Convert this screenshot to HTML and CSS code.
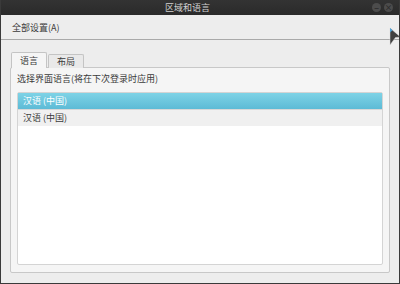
FILE: index.html
```html
<!DOCTYPE html>
<html lang="zh-CN">
<head>
    <meta charset="UTF-8">
    <title>区域和语言</title>
    <link rel="stylesheet" href="styles.css">
</head>
<body>
    <div class="window">
        <div class="titlebar">
            <span class="title">区域和语言</span>
            <div class="wm-buttons">
                <span class="wm-btn">&minus;</span>
                <span class="wm-btn">&times;</span>
            </div>
        </div>
        <div class="menubar">
            <span class="menu-item">全部设置(A)</span>
        </div>
        <div class="content">
            <div class="tabs">
                <div class="tab active">语言</div>
                <div class="tab">布局</div>
            </div>
            <div class="panel">
                <p class="label">选择界面语言(将在下次登录时应用)</p>
                <div class="list">
                    <div class="row selected">汉语 (中国)</div>
                    <div class="row">汉语 (中国)</div>
                </div>
            </div>
        </div>
        <svg class="pointer" width="12" height="19" viewBox="0 0 12 19">
            <polygon points="1,1 11.5,10 6.5,10.5 1,18" fill="#404040" stroke="#dcdcdc" stroke-width="0.5"/>
            <polygon points="1,1 3.5,3.2 1,5.5" fill="#4fa3d8"/>
        </svg>
    </div>
</body>
</html>
```

FILE: styles.css
```css
html, body {
    margin: 0;
    padding: 0;
}
body {
    font-family: "Noto Sans CJK SC", "Noto Sans", sans-serif;
    font-size: 9px;
    color: #3c3c3c;
    background: #2b2b2b;
}
.window {
    position: relative;
    width: 400px;
    height: 284px;
    box-sizing: border-box;
    background: #ededed;
    border: 1px solid #3a3a3a;
    border-top: none;
    display: flex;
    flex-direction: column;
    overflow: hidden;
}
.titlebar {
    height: 15px;
    margin: 0 -1px;
    padding-right: 25px;
    background: linear-gradient(#333333, #2a2a2a);
    display: flex;
    align-items: center;
    justify-content: center;
    position: relative;
}
.title {
    color: #d2d2d2;
    font-size: 9px;
    line-height: 15px;
}
.wm-buttons {
    position: absolute;
    right: 7px;
    top: 3px;
    display: flex;
    gap: 3px;
}
.wm-btn {
    width: 9px;
    height: 9px;
    border-radius: 50%;
    background: #4c4c4c;
    color: #2e2e2e;
    font-size: 8px;
    line-height: 9px;
    text-align: center;
    font-weight: bold;
}
.menubar {
    height: 24px;
    border-bottom: 1px solid #a9a9a9;
    display: flex;
    align-items: center;
    padding-left: 11px;
}
.menu-item {
    color: #3a3a3a;
}
.content {
    flex: 1;
    display: flex;
    flex-direction: column;
    padding: 12px 9px 10px 9px;
}
.tabs {
    display: flex;
    align-items: flex-end;
    gap: 1px;
    padding-left: 1px;
    position: relative;
    z-index: 1;
    margin-bottom: -1px;
}
.tab {
    width: 34px;
    height: 13px;
    line-height: 13px;
    text-align: center;
    border: 1px solid #c4c4c4;
    border-bottom: none;
    border-radius: 2px 2px 0 0;
    background: #e9e9e9;
    color: #3a3a3a;
}
.tab.active {
    height: 15px;
    line-height: 15px;
    background: #f5f5f5;
}
.panel {
    flex: 1;
    display: flex;
    flex-direction: column;
    background: #f5f5f5;
    border: 1px solid #c8c8c8;
    border-radius: 2px;
    padding: 4px 6px 7px 6px;
}
.label {
    margin: 0 0 6px 0;
    line-height: 14px;
    color: #3a3a3a;
}
.list {
    flex: 1;
    background: #ffffff;
    border: 1px solid #d4d4d4;
    border-radius: 2px;
}
.row {
    height: 16px;
    line-height: 16px;
    padding-left: 5px;
    background: #f0f0f0;
    color: #3a3a3a;
}
.row.selected {
    background: linear-gradient(#7ed3e6, #5dbbd6);
    color: #ffffff;
    border-bottom: 1px solid #d8d8d8;
}
.pointer {
    position: absolute;
    left: 388px;
    top: 27px;
}
```
